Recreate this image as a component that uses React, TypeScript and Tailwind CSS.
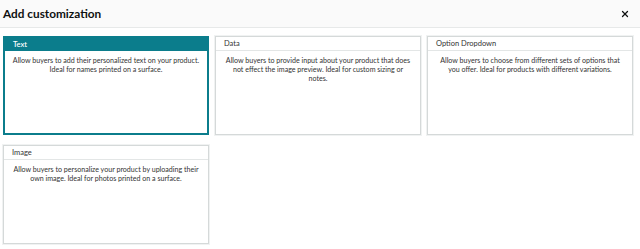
import { X } from "lucide-react";

type Option = { name: string; desc: string; selected?: boolean };

const OPTIONS: Option[] = [
  {
    name: "Text",
    desc: "Allow buyers to add their personalized text on your product. Ideal for names printed on a surface.",
    selected: true,
  },
  {
    name: "Data",
    desc: "Allow buyers to provide input about your product that does not effect the image preview. Ideal for custom sizing or notes.",
  },
  {
    name: "Option Dropdown",
    desc: "Allow buyers to choose from different sets of options that you offer. Ideal for products with different variations.",
  },
  {
    name: "Image",
    desc: "Allow buyers to personalize your product by uploading their own image. Ideal for photos printed on a surface.",
  },
];

function OptionCard({ o }: { o: Option }) {
  return (
    <div
      className={
        o.selected
          ? "h-[99px] border-2 border-[#0b7d8c] bg-white"
          : "h-[99px] border border-[#d5d9d9] bg-white shadow-[0_0_0_1px_#f0f2f2]"
      }
    >
      <div
        className={
          o.selected
            ? "flex h-[13px] items-center bg-[#0b7d8c] px-[8px] text-[7.5px] font-semibold text-white"
            : "flex h-[14px] items-center border-b border-[#e3e6e6] px-[8px] text-[7.5px] text-[#333]"
        }
      >
        {o.name}
      </div>
      <p className="mx-auto mt-[5px] w-[187px] text-center text-[7.1px] leading-[9px] text-[#333]">
        {o.desc}
      </p>
    </div>
  );
}

export default function App() {
  return (
    <div
      className="h-[249px] w-[640px] overflow-hidden bg-white"
      style={{ fontFamily: "Lato, Arial, sans-serif" }}
    >
      <div className="flex h-[28px] items-center justify-between border-b border-[#e7e9e9] bg-[#fafafa] pl-[3px] pr-[10px]">
        <h1 className="text-[11.8px] font-bold text-[#0f1111]">Add customization</h1>
        <X className="h-[10px] w-[10px] text-[#0f1111]" strokeWidth={3} />
      </div>
      <div className="grid grid-cols-[206px_206px_206px] gap-x-[6px] gap-y-[10px] pl-[3px] pt-[8px]">
        {OPTIONS.map((o) => (
          <OptionCard key={o.name} o={o} />
        ))}
      </div>
    </div>
  );
}
